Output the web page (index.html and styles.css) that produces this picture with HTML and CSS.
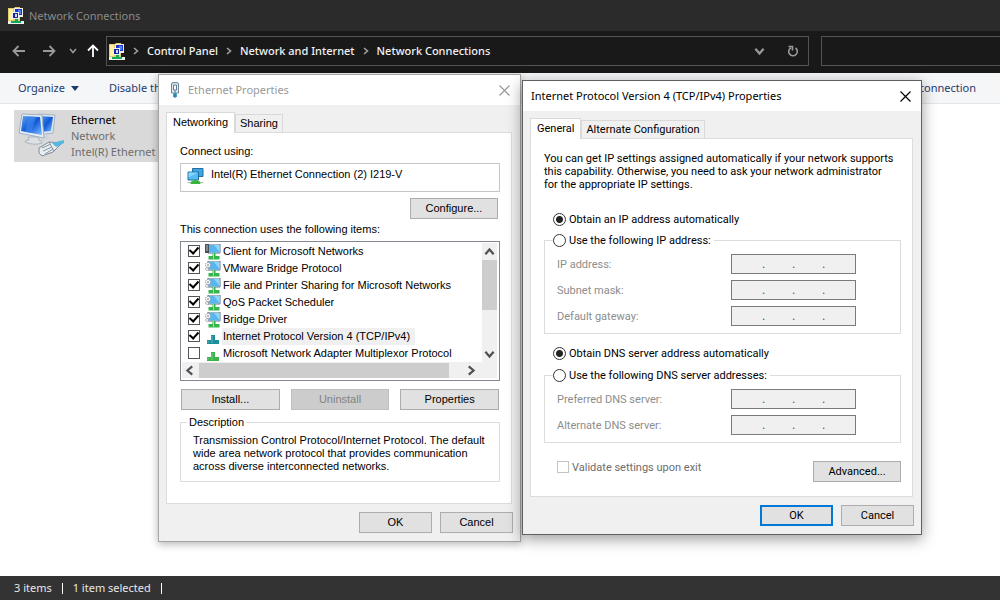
FILE: index.html
```html
<!DOCTYPE html>
<html lang="en">
<head>
<meta charset="utf-8">
<title>Network Connections</title>
<link rel="stylesheet" href="styles.css">
</head>
<body>
<svg class="sprite" aria-hidden="true">
  <symbol id="i-folder-net" viewBox="0 0 16 17">
    <path d="M0 1h6l1-1h5v14H0z" fill="#e6cb66"/><path d="M1 2h4v11H1z" fill="#fbf0a4"/>
    <path d="M6 1h9v9H6z" fill="#f1efe2"/><path d="M7 2h7v6H7z" fill="#1c34c8"/><path d="M10 3h3v4h-3z" fill="#4f83f2"/>
    <path d="M4 5h7v7H4z" fill="#f4f2e6"/><path d="M5 6h5v5H5z" fill="#1527a8"/><path d="M7 7h2v3H7z" fill="#c9dcff"/>
    <path d="M0 14h16v3H0z" fill="#e8f4ec"/><path d="M7 12h3v2h3v2H3v-2h4z" fill="#12a85c"/>
  </symbol>
  <symbol id="i-pc-net" viewBox="0 0 16 16">
    <path d="M3 0h12v9H3z" fill="#e9f3f8" stroke="#60737e"/><path d="M4 1h10.500v7.500H4z" fill="#57b6ef"/><path d="M9 1h5.500v7z" fill="#8fd5fa"/>
    <path d="M7.500 9h3v3h4v3.500h-11V12h4z" fill="#36b54c"/><path d="M8.500 9v6" stroke="#99e29b"/>
  </symbol>
  <symbol id="i-client" viewBox="0 0 16 16">
    <use href="#i-pc-net"/><path d="M0 0h4v9H0z" fill="#46525a"/><path d="M1 2h2M1 4h2M1 6h2" stroke="#b6c0c6"/>
  </symbol>
  <symbol id="i-service" viewBox="0 0 16 16">
    <use href="#i-pc-net"/><circle cx="3" cy="4" r="2.600" fill="#f5f7f8" stroke="#8b989f" stroke-dasharray="1.400 .8"/><circle cx="3" cy="4" r="1" fill="#9aa7ae"/>
    <circle cx="2" cy="8" r="1.600" fill="#dfe5e8" stroke="#98a5ac" stroke-dasharray="1 .6"/>
  </symbol>
  <symbol id="i-proto" viewBox="0 0 16 16">
    <path d="M6 6h4v5h4v4H2v-4h4z" fill="currentColor"/><path d="M7 7v7M3 12v2" stroke="#fff" stroke-opacity=".35"/>
  </symbol>
  <symbol id="i-adapter" viewBox="0 0 16 16">
    <path d="M5 .5h10.500v8H5z" fill="#3ba7e8" stroke="#256c99"/><path d="M.5 4h10.500v8H.5z" fill="#53bdf4" stroke="#256c99"/><path d="M1 4.500h9.500l-9.500 5z" fill="#85d4fb"/>
    <path d="M3 14q5-4 10 0v2H3z" fill="#37b43c"/><path d="M0 14.500h3M13 14.500h3" stroke="#aebbb0"/>
  </symbol>
  <symbol id="i-plug" viewBox="0 0 10 16">
    <path d="M1.500 2Q1.500.6 3 .6h4Q8.500.6 8.500 2v9h-7z" fill="#dfeaf0" stroke="#6c8796"/><path d="M3.500 3h3v5h-3z" fill="#fff" stroke="#5d7f94"/>
    <path d="M5 8v3" stroke="#5d7f94"/><path d="M3 11.500h4V15H3z" fill="#3f9fc8"/><path d="M5 11v5" stroke="#1c6f98"/>
  </symbol>
  <symbol id="i-x" viewBox="0 0 11 11"><path d="M.5.5l10 10M10.500.5l-10 10" fill="none" stroke="currentColor" stroke-width="1.200"/></symbol>
  <symbol id="i-chev" viewBox="0 0 8 8"><path d="M1 2l3 3.500L7 2" fill="none" stroke="currentColor" stroke-width="1.600"/></symbol>
  <symbol id="i-arrow" viewBox="0 0 14 12"><path d="M13 6H1.500M6.500 1l-5 5 5 5" fill="none" stroke="currentColor" stroke-width="1.800"/></symbol>
</svg>

<div class="explorer">
  <header class="caption"><svg class="ic-folder"><use href="#i-folder-net"/></svg><span>Network Connections</span></header>
  <nav class="navbar">
    <button class="nav-btn" aria-label="Back"><svg class="ic-arrow"><use href="#i-arrow"/></svg></button>
    <button class="nav-btn fwd" aria-label="Forward"><svg class="ic-arrow flip"><use href="#i-arrow"/></svg></button>
    <button class="nav-btn recent" aria-label="Recent"><svg class="ic-chev"><use href="#i-chev"/></svg></button>
    <button class="nav-btn up" aria-label="Up"><svg class="ic-arrow turn"><use href="#i-arrow"/></svg></button>
    <div class="address">
      <svg class="ic-folder"><use href="#i-folder-net"/></svg>
      <svg class="ic-chev side"><use href="#i-chev"/></svg><a href="#">Control Panel</a>
      <svg class="ic-chev side"><use href="#i-chev"/></svg><a href="#">Network and Internet</a>
      <svg class="ic-chev side"><use href="#i-chev"/></svg><a href="#">Network Connections</a>
      <button class="nav-btn drop" aria-label="History"><svg class="ic-drop"><use href="#i-chev"/></svg></button>
      <button class="nav-btn refresh" aria-label="Refresh"><svg class="ic-refresh" viewBox="0 0 12 12"><path d="M8.500 3A4.300 4.300 0 1 1 4 2.700M1.500 1.500h4v4" fill="none" stroke="currentColor" stroke-width="1.600"/></svg></button>
    </div>
    <input class="search" type="search" aria-label="Search">
  </nav>
  <div class="commands">
    <button class="cmd">Organize <span class="tri"></span></button>
    <button class="cmd">Disable th</button>
    <button class="cmd last">Change settings of this connection</button>
  </div>
  <main class="files">
    <article class="item">
      <svg class="ic-ethernet" viewBox="0 0 46 46">
        <defs><linearGradient id="scr" x1="0" y1="0" x2="1" y2="1"><stop offset="0" stop-color="#5da2ee"/><stop offset=".5" stop-color="#0f57d6"/><stop offset="1" stop-color="#7fc0ff"/></linearGradient></defs>
        <path d="M20 2l17 1-2 18-15 2z" fill="#dfe7ef" stroke="#a3b3c4"/><path d="M22 4l13 1-2 14-11 1z" fill="url(#scr)"/>
        <path d="M10 25h10l1 3q4 1 3 3-8 3-17-1 0-2 4-2z" fill="#dde1e6" stroke="#adb4bd"/>
        <path d="M28 22l3 4-7 3" fill="#ccd3db"/>
        <path d="M4 2l20 1 2 23-25-5z" fill="#e6edf5" stroke="#9fb1c4"/><path d="M5 4l17 1 2 18-21-4z" fill="url(#scr)"/><path d="M11 4.500l7 .4-5 16-6-1z" fill="#3f8af2" opacity=".6"/>
        <path d="M21 36l10-6 13 1-9 9-11 4-3-3z" fill="#e8edf0" stroke="#7d8c98"/><path d="M24 36l9-4M25 39l9-4M27 42l8-5M31 30l5 9" stroke="#8796a2" fill="none"/>
        <path d="M34 31l12-3v3l-8 4z" fill="#55b7df"/>
      </svg>
      <div class="item-text"><strong>Ethernet</strong><span>Network</span><span>Intel(R) Ethernet</span></div>
    </article>
  </main>
  <footer class="status"><span>3 items</span><span>1 item selected</span></footer>
</div>

<section class="dialog eth" aria-label="Ethernet Properties">
  <header class="dlg-title"><svg class="ic-plug"><use href="#i-plug"/></svg><h2>Ethernet Properties</h2><button class="close" aria-label="Close"><svg class="ic-x"><use href="#i-x"/></svg></button></header>
  <div class="tabs"><button class="tab active">Networking</button><button class="tab">Sharing</button></div>
  <div class="panel">
    <p class="line">Connect using:</p>
    <div class="adapter"><svg class="ic16"><use href="#i-adapter"/></svg><span>Intel(R) Ethernet Connection (2) I219-V</span></div>
    <div class="right"><button class="btn wide">Configure...</button></div>
    <p class="line uses">This connection uses the following items:</p>
    <div class="list">
      <div class="list-main">
        <div class="rows">
          <label class="row"><input type="checkbox" checked><svg class="ic16"><use href="#i-client"/></svg><span>Client for Microsoft Networks</span></label>
          <label class="row"><input type="checkbox" checked><svg class="ic16"><use href="#i-service"/></svg><span>VMware Bridge Protocol</span></label>
          <label class="row"><input type="checkbox" checked><svg class="ic16"><use href="#i-service"/></svg><span>File and Printer Sharing for Microsoft Networks</span></label>
          <label class="row"><input type="checkbox" checked><svg class="ic16"><use href="#i-service"/></svg><span>QoS Packet Scheduler</span></label>
          <label class="row"><input type="checkbox" checked><svg class="ic16"><use href="#i-service"/></svg><span>Bridge Driver</span></label>
          <label class="row selected"><input type="checkbox" checked><svg class="ic16 teal"><use href="#i-proto"/></svg><span>Internet Protocol Version 4 (TCP/IPv4)</span></label>
          <label class="row"><input type="checkbox"><svg class="ic16 green"><use href="#i-proto"/></svg><span>Microsoft Network Adapter Multiplexor Protocol</span></label>
        </div>
        <div class="vbar"><svg class="ic-sb up"><use href="#i-chev"/></svg><i class="vthumb"></i><svg class="ic-sb end"><use href="#i-chev"/></svg></div>
      </div>
      <div class="hbar"><svg class="ic-sb left"><use href="#i-chev"/></svg><i class="hthumb"></i><svg class="ic-sb rt"><use href="#i-chev"/></svg></div>
    </div>
    <div class="trio"><button class="btn">Install...</button><button class="btn" disabled>Uninstall</button><button class="btn">Properties</button></div>
    <fieldset class="desc"><legend>Description</legend><p>Transmission Control Protocol/Internet Protocol. The default<br>wide area network protocol that provides communication<br>across diverse interconnected networks.</p></fieldset>
  </div>
  <footer class="dlg-foot"><button class="btn">OK</button><button class="btn">Cancel</button></footer>
</section>

<section class="dialog ip" aria-label="Internet Protocol Version 4 Properties">
  <header class="dlg-title"><h2>Internet Protocol Version 4 (TCP/IPv4) Properties</h2><button class="close" aria-label="Close"><svg class="ic-x"><use href="#i-x"/></svg></button></header>
  <div class="tabs"><button class="tab active">General</button><button class="tab">Alternate Configuration</button></div>
  <div class="panel">
    <p class="intro">You can get IP settings assigned automatically if your network supports<br>this capability. Otherwise, you need to ask your network administrator<br>for the appropriate IP settings.</p>
    <label class="radio"><input type="radio" name="ip" checked>Obtain an IP address automatically</label>
    <fieldset class="group">
      <legend><label class="radio"><input type="radio" name="ip">Use the following IP address:</label></legend>
      <div class="field"><label for="ipa">IP address:</label><input id="ipa" disabled value=".&nbsp;&nbsp;&nbsp;&nbsp;&nbsp;&nbsp;&nbsp;&nbsp;.&nbsp;&nbsp;&nbsp;&nbsp;&nbsp;&nbsp;&nbsp;&nbsp;."></div>
      <div class="field"><label for="mask">Subnet mask:</label><input id="mask" disabled value=".&nbsp;&nbsp;&nbsp;&nbsp;&nbsp;&nbsp;&nbsp;&nbsp;.&nbsp;&nbsp;&nbsp;&nbsp;&nbsp;&nbsp;&nbsp;&nbsp;."></div>
      <div class="field"><label for="gw">Default gateway:</label><input id="gw" disabled value=".&nbsp;&nbsp;&nbsp;&nbsp;&nbsp;&nbsp;&nbsp;&nbsp;.&nbsp;&nbsp;&nbsp;&nbsp;&nbsp;&nbsp;&nbsp;&nbsp;."></div>
    </fieldset>
    <label class="radio second"><input type="radio" name="dns" checked>Obtain DNS server address automatically</label>
    <fieldset class="group">
      <legend><label class="radio"><input type="radio" name="dns">Use the following DNS server addresses:</label></legend>
      <div class="field"><label for="dns1">Preferred DNS server:</label><input id="dns1" disabled value=".&nbsp;&nbsp;&nbsp;&nbsp;&nbsp;&nbsp;&nbsp;&nbsp;.&nbsp;&nbsp;&nbsp;&nbsp;&nbsp;&nbsp;&nbsp;&nbsp;."></div>
      <div class="field"><label for="dns2">Alternate DNS server:</label><input id="dns2" disabled value=".&nbsp;&nbsp;&nbsp;&nbsp;&nbsp;&nbsp;&nbsp;&nbsp;.&nbsp;&nbsp;&nbsp;&nbsp;&nbsp;&nbsp;&nbsp;&nbsp;."></div>
    </fieldset>
    <div class="bottom"><label class="validate"><input type="checkbox" disabled>Validate settings upon exit</label><button class="btn wide">Advanced...</button></div>
  </div>
  <footer class="dlg-foot"><button class="btn default">OK</button><button class="btn">Cancel</button></footer>
</section>
</body>
</html>
```
FILE: styles.css
```css
* { box-sizing: border-box; }
body { margin: 0; font: 11px/16px "Noto Sans", sans-serif; color: #000; background: #fff; overflow: hidden; }
button { font: inherit; color: inherit; border: 0; padding: 0; background: none; }
input { margin: 0; font: inherit; }
p, h2 { margin: 0; font-size: inherit; font-weight: normal; }
a { color: inherit; text-decoration: none; }
svg { display: block; flex: none; }
.sprite { position: absolute; width: 0; height: 0; }

.ic-folder { width: 16px; height: 17px; }
.ic-arrow { width: 14px; height: 12px; }
.ic-chev { width: 8px; height: 8px; }
.ic-drop { width: 11px; height: 11px; }
.ic-refresh { width: 12px; height: 12px; }
.ic-plug { width: 10px; height: 16px; }
.ic-x { width: 11px; height: 11px; }
.ic16 { width: 16px; height: 16px; }
.ic-sb { width: 11px; height: 11px; color: #505050; }
.flip { transform: scaleX(-1); }
.turn { transform: rotate(90deg); }
.side, .rt { transform: rotate(-90deg); }
.left { transform: rotate(90deg); }
.ic-sb.up { transform: rotate(180deg); }

.explorer { display: flex; flex-direction: column; height: 100vh; }
.caption { display: flex; align-items: center; gap: 5px; height: 31px; padding-left: 8px; background: #2b2b2b; color: #8a8a8a; }
.navbar { display: flex; align-items: center; height: 42px; padding: 5px 0 7px 12px; background: #191919; color: #999; }
.nav-btn { display: grid; place-items: center; width: 14px; }
.nav-btn.fwd { margin-left: 16px; }
.nav-btn.recent { width: 8px; margin-left: 13px; }
.nav-btn.up { margin-left: 9px; color: #fff; }
.address { display: flex; align-items: center; flex: 703; align-self: stretch; margin-left: 6px; padding-left: 2px; border: 1px solid #535353; color: #f2f2f2; font-weight: 500; }
.address .side { margin: 0 7px; color: #a0a0a0; }
.address .drop { margin-left: auto; width: 35px; color: #999; }
.address .refresh { width: 31px; color: #999; }
.search { flex: 179; min-width: 0; align-self: stretch; margin-left: 12px; border: 1px solid #535353; border-right: 0; background: #191919; color: #fff; appearance: none; border-radius: 0; padding: 0; }
.commands { display: flex; align-items: center; height: 31px; padding: 0 24px 0 18px; background: #f5f6f8; border-bottom: 1px solid #e4e7ea; color: #1e3a6e; }
.cmd { display: flex; align-items: center; gap: 6px; margin-right: 30px; white-space: nowrap; }
.cmd.last { margin: 0 0 0 auto; }
.tri { border: 4px solid transparent; border-top: 5px solid #1e3a6e; border-bottom: 0; }
.files { flex: 1; padding: 6px 14px; }
.item { display: flex; width: 250px; height: 52px; background: #d9d9d9; overflow: hidden; }
.ic-ethernet { width: 46px; height: 46px; margin: 2px 7px 0 4px; }
.item-text { display: flex; flex-direction: column; padding-top: 2px; color: #6d6d6d; white-space: nowrap; }
.item-text strong { font-weight: normal; color: #000; }
.status { display: flex; align-items: center; height: 24px; padding-left: 14px; background: #333; color: #e8e8e8; }
.status span { display: flex; align-items: center; gap: 10px; margin-right: 10px; }
.status span::after { content: ""; width: 1px; height: 11px; background: #fff; }

.dialog { position: absolute; display: flex; flex-direction: column; background: #f0f0f0; border: 1px solid #a5a5a5; color: #000; }
.eth { left: 158px; top: 74px; width: 363px; font: 11px/13px "Liberation Sans", Arial, sans-serif; box-shadow: 0 2px 8px rgba(0, 0, 0, .3); }
.ip { left: 522px; top: 80px; width: 400px; border-color: #606060; font: 11px/13px Roboto, sans-serif; box-shadow: 0 4px 14px rgba(0, 0, 0, .4); }
.dlg-title { display: flex; align-items: center; height: 30px; padding: 0 10px; background: #fff; font: 11px/16px "Noto Sans", sans-serif; }
.eth .dlg-title { color: #999; gap: 8px; padding-left: 11px; }
.ip .dlg-title { padding-left: 8px; }
.close { margin-left: auto; }
.tabs { display: flex; align-items: flex-end; margin: 7px 8px 0 7px; }
.tab { height: 18px; padding: 0 4px; border: 1px solid #d9d9d9; border-bottom: 0; background: #f0f0f0; }
.tab.active { height: 21px; margin-bottom: -1px; padding: 0 6px 2px; background: #fff; z-index: 1; }
.panel { display: flex; flex-direction: column; margin: 0 8px 0 7px; border: 1px solid #dcdcdc; background: #fff; }
.eth .panel { padding: 12px 11px 21px 13px; }
.ip .panel { padding: 13px 11px 14px 13px; }
.btn { min-width: 73px; height: 21px; border: 1px solid #adadad; background: #e1e1e1; text-align: center; }
.btn:disabled { color: #838383; background: #ccc; border-color: #bfbfbf; }
.btn.wide { min-width: 88px; }
.btn.default { border: 2px solid #0078d7; }
.dlg-foot { display: flex; justify-content: flex-end; gap: 8px; padding: 8px 7px; }

.adapter { display: flex; gap: 7px; height: 29px; margin-top: 5px; padding: 4px 6px; border: 1px solid #c6c6c6; }
.adapter .ic16 { width: 17px; }
.right { display: flex; justify-content: flex-end; margin: 6px 2px 0 0; }
.uses { margin: 4px 0 5px; }
.list { border: 1px solid #828790; padding: 1px 2px 2px 1px; }
.list-main { display: flex; }
.rows { flex: 1; }
.row { display: flex; align-items: center; height: 17px; padding-left: 6px; white-space: nowrap; }
.row .ic16 { margin: 0 1px 0 5px; }
.row span { padding: 2px 5px 2px 1px; }
.selected span { background: #f0f0f0; }
.teal { color: #19909a; }
.green { color: #39b54a; }
input[type="checkbox"] { appearance: none; flex: none; display: grid; place-items: center; width: 12px; height: 12px; border: 1px solid #555; background: #fff; }
.row input[type="checkbox"] { margin-bottom: 2px; }
input[type="checkbox"]:checked::before { content: ""; width: 4px; height: 7px; margin-top: -2px; border: solid #000; border-width: 0 2px 2px 0; transform: rotate(42deg); }
input[type="checkbox"]:disabled { border-color: #c4c4c4; }
.vbar { display: flex; flex-direction: column; align-items: center; width: 15px; padding: 3px 0 2px; background: #f0f0f0; }
.vthumb { width: 15px; height: 50px; margin-top: 3px; background: #cdcdcd; }
.ic-sb.end { margin-top: auto; }
.hbar { display: flex; align-items: center; height: 16px; padding: 0 20px 0 2px; background: #f0f0f0; }
.hthumb { flex: 1; height: 15px; margin: 0 17px 0 4px; background: #cdcdcd; }
.trio { display: grid; grid-template-columns: repeat(3, 1fr); gap: 11px; margin: 8px 1px 0; }
fieldset { min-width: 0; margin: 0; border: 1px solid #dcdcdc; }
legend { padding: 0; }
.desc { margin-top: 6px; padding: 5px 10px 8px 12px; }
.desc legend { margin-left: -6px; padding: 0 2px; }

.radio { display: flex; align-items: center; height: 13px; gap: 3px; }
.intro { margin-bottom: 22px; }
.ip .panel > .radio { padding-left: 9px; }
input[type="radio"] { appearance: none; flex: none; width: 13px; height: 13px; border: 1px solid #333; border-radius: 50%; background: #fff; }
input[type="radio"]:checked { background: radial-gradient(circle, #222 0 3px, #fff 4px); }
.group { display: flex; flex-direction: column; gap: 6px; margin-top: 8px; padding: 7px 44px 7px 12px; }
.group legend { margin-left: -4px; padding-right: 3px; }
.field { display: flex; justify-content: space-between; align-items: center; color: #8d8d8d; }
.field input { width: 125px; height: 20px; padding: 0 0 0 30px; border: 1px solid #7a7a7a; background: #f0f0f0; color: #555; font: 12px/16px "Liberation Sans", Arial, sans-serif; }
.second { margin: 13px 0 1px; }
.bottom { display: flex; justify-content: space-between; margin-top: 18px; padding-left: 13px; }
.validate { display: flex; align-items: center; gap: 3px; height: 12px; color: #6d6d6d; }
```
